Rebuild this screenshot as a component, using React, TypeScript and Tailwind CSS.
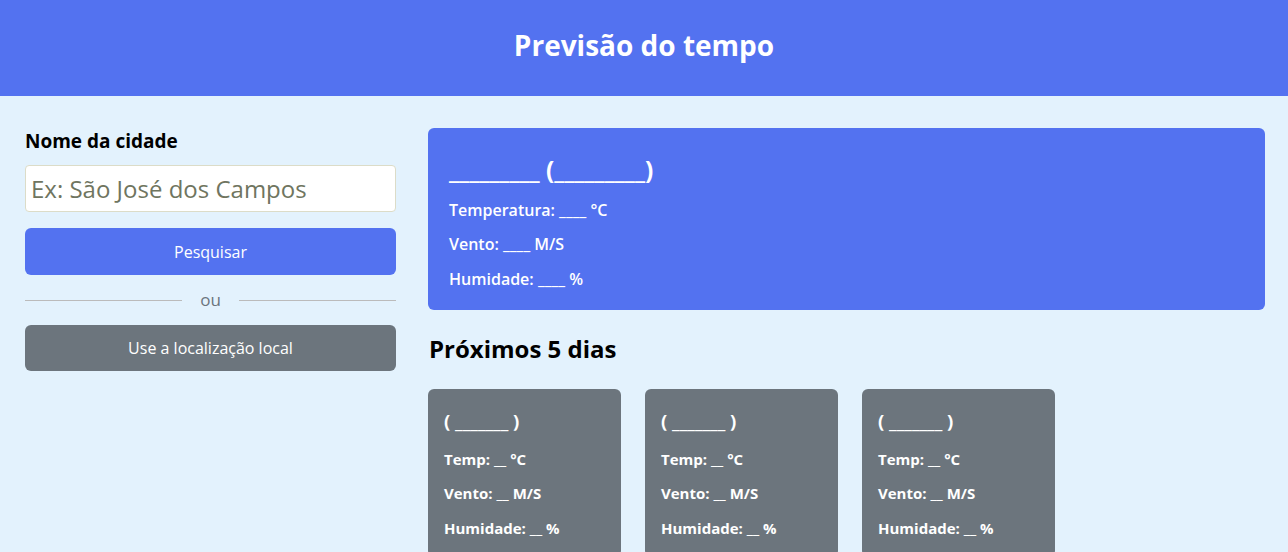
import React from 'react';

const days = [1, 2, 3, 4, 5];

const App: React.FC = () => {
  return (
    <div className="min-h-screen bg-[#E3F2FD] font-['Open_Sans',sans-serif]">
      {/* Header */}
      <header className="h-[96px] bg-[#5372F0] flex items-center justify-center pb-[6px]">
        <h1 className="text-white text-[28px] font-bold leading-none">Previsão do tempo</h1>
      </header>

      <div className="flex gap-[32px] pl-[25px] pr-[23px] pt-[33px]">
        {/* Search column */}
        <div className="w-[371px] shrink-0">
          <label className="block text-[19px] font-bold leading-[24px] text-black">Nome da cidade</label>
          <input
            type="text"
            placeholder="Ex: São José dos Campos"
            className="mt-[12px] block w-full h-[47px] px-[5px] bg-white border border-[#dcdcc8] rounded-[4px] text-[24px] outline-none placeholder:text-[#6f7560]"
          />
          <button className="mt-[16px] w-full h-[47px] rounded-[6px] bg-[#5372F0] text-white text-[16px]">
            Pesquisar
          </button>
          <div className="mt-[16px] flex items-center h-[18px]">
            <div className="flex-1 h-px bg-[#BBBBBB]" />
            <span className="px-[18px] text-[17px] leading-none text-[#6C757D] -mt-[2px]">ou</span>
            <div className="flex-1 h-px bg-[#BBBBBB]" />
          </div>
          <button className="mt-[16px] w-full h-[46px] rounded-[6px] bg-[#6C757D] text-white text-[16px]">
            Use a localização local
          </button>
        </div>

        {/* Weather data */}
        <div className="flex-1">
          <div className="-mt-[1px] bg-[#5372F0] rounded-[6px] text-white pl-[21px] pt-[26px] pb-[21px]">
            <h2 className="text-[24.5px] font-bold leading-[32px]">_________ (_________)</h2>
            <h6 className="mt-[14px] text-[16px] font-semibold leading-[20px]">Temperatura: ____ °C</h6>
            <h6 className="mt-[14px] text-[16px] font-semibold leading-[20px]">Vento: ____ M/S</h6>
            <h6 className="mt-[15px] text-[16px] font-semibold leading-[20px]">Humidade: ____ %</h6>
          </div>

          <h2 className="mt-[23px] pl-[1px] text-[24px] font-bold leading-[32px] text-black">Próximos 5 dias</h2>

          <ul className="mt-[24px] flex flex-wrap gap-[24px]">
            {days.map((d) => (
              <li key={d} className="w-[193px] bg-[#6C757D] rounded-[6px] text-white px-[16px] pt-[20px] pb-[20px]">
                <h3 className="text-[18.5px] font-bold leading-[24px]">( _______ )</h3>
                <h6 className="mt-[17px] text-[15px] font-bold leading-[18px]">Temp: __ °C</h6>
                <h6 className="mt-[16px] text-[15px] font-bold leading-[18px]">Vento: __ M/S</h6>
                <h6 className="mt-[17px] text-[15px] font-bold leading-[18px]">Humidade: __ %</h6>
              </li>
            ))}
          </ul>
        </div>
      </div>
    </div>
  );
};

export default App;
